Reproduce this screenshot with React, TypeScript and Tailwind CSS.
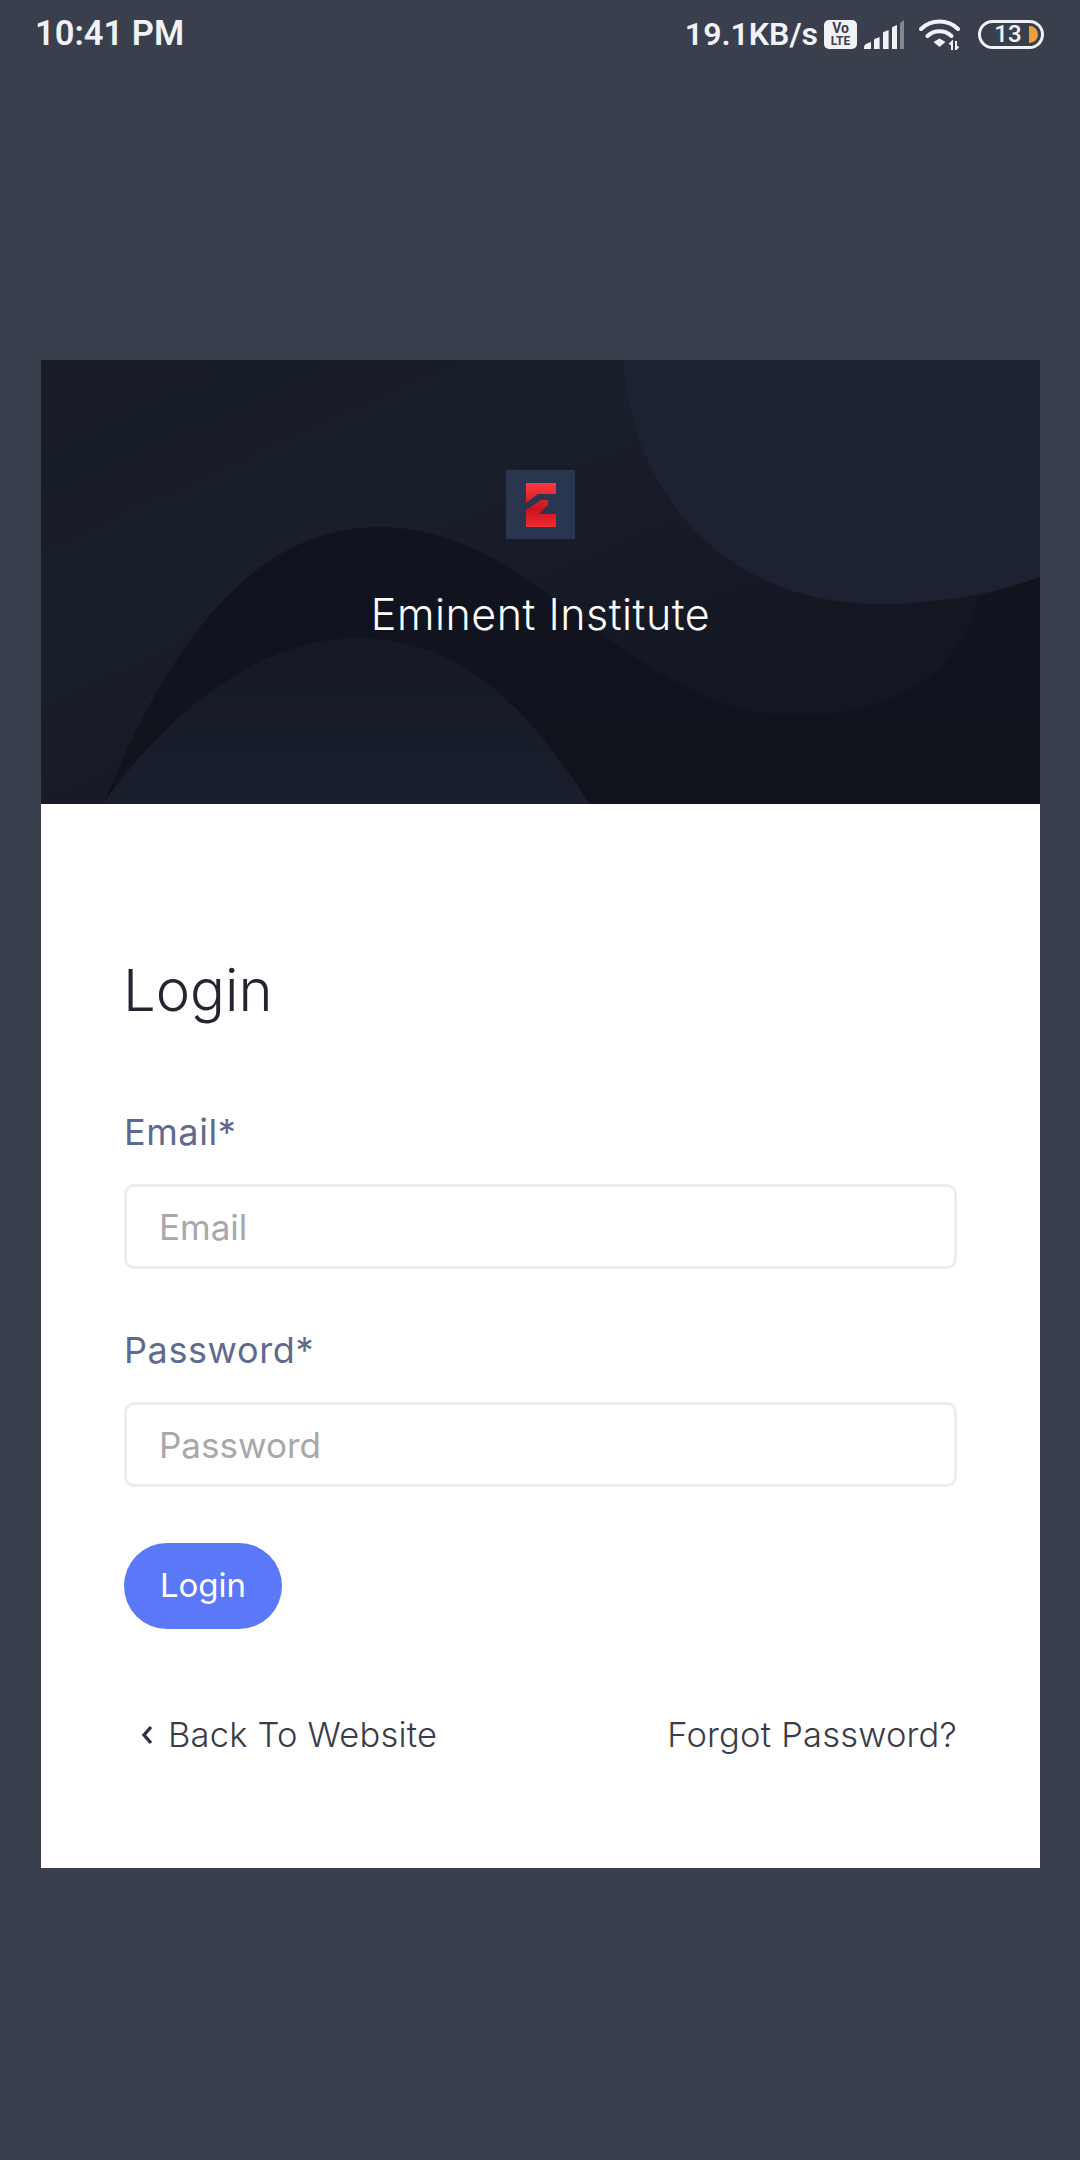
import * as React from "react"

function SignalIcon() {
  return (
    <svg width="40" height="30" viewBox="0 0 40 30" className="ml-[7px]">
      <path d="M0 30 v-2 a4 4 0 0 1 3-3.5 l4-1.5 v7z" fill="#f1f2f5" />
      <path d="M10 30 v-9 a1 1 0 0 1 .6-1 l5-2 v12z" fill="#f1f2f5" />
      <path d="M19 30 v-16 a1 1 0 0 1 .6-1 l5-2 v19z" fill="#f1f2f5" />
      <path d="M28 30 v-21 a1 1 0 0 1 .6-1 l4.4-2 v24z" fill="#f1f2f5" />
      <path d="M36 30 v-26 l4-3 v29z" fill="#83878f" />
    </svg>
  )
}

function WifiIcon() {
  return (
    <svg width="42" height="32" viewBox="0 0 42 32" className="ml-[15px]" fill="none">
      <path d="M2 11 C12 1 29 1 39 11" stroke="#f1f2f5" strokeWidth="4" strokeLinecap="round" />
      <path d="M8.5 18 C15 11.5 26 11.5 32.5 18" stroke="#f1f2f5" strokeWidth="4" strokeLinecap="round" />
      <path d="M14.5 24 L20.5 20.5 L26.5 24 L20.5 29z" fill="#f1f2f5" />
      <path d="M33 32 V24 L30.5 26.5" stroke="#f1f2f5" strokeWidth="2" />
      <path d="M37 23 V31 L39.5 28.5" stroke="#f1f2f5" strokeWidth="2" />
    </svg>
  )
}

function BatteryIcon() {
  return (
    <div className="relative ml-[17px] flex h-[29px] w-[66px] items-center justify-center rounded-full border-[3px] border-[#f1f2f5] pr-[6px]">
      <span className="font-['Roboto',sans-serif] text-[24px] leading-none font-medium text-[#f1f2f5]">13</span>
      <span className="absolute top-[3px] right-[3px] h-[17px] w-[9px] rounded-r-full bg-[#e9a23b]" />
    </div>
  )
}

function StatusBar() {
  return (
    <div className="flex h-[68px] items-center justify-between pr-[36px] pl-[35px] font-['Roboto',sans-serif] font-semibold text-[#f1f2f5]">
      <span className="text-[34.5px]">10:41 PM</span>
      <div className="flex items-center text-[32px]">
        <span>19.1KB/s</span>
        <div className="ml-[6px] flex h-[29px] w-[33px] flex-col items-center justify-center rounded-[5px] bg-[#f1f2f5] text-[#3a3f4d]">
          <span className="text-[14px] leading-[13px] font-bold">Vo</span>
          <span className="text-[12px] leading-[12px] font-bold">LTE</span>
        </div>
        <SignalIcon />
        <WifiIcon />
        <BatteryIcon />
      </div>
    </div>
  )
}

function HeaderWaves() {
  return (
    <svg className="absolute inset-0" width="999" height="444" viewBox="0 0 999 444">
      <defs>
        <linearGradient id="base-fill" x1="0" y1="0" x2="1" y2="1">
          <stop offset="0" stopColor="#171c28" />
          <stop offset="0.35" stopColor="#191e2b" />
          <stop offset="0.7" stopColor="#141722" />
        </linearGradient>
        <linearGradient id="dark-fill" x1="0" y1="0" x2="0" y2="1">
          <stop offset="0" stopColor="#11141f" />
          <stop offset="1" stopColor="#10131c" />
        </linearGradient>
        <linearGradient id="bump-fill" x1="0" y1="0" x2="0" y2="1">
          <stop offset="0" stopColor="#151925" />
          <stop offset="1" stopColor="#1a1f2e" />
        </linearGradient>
      </defs>
      <rect width="999" height="444" fill="url(#base-fill)" />
      {/* dark wave */}
      <path
        d="M62 444 C110 330 190 167 338 167 C500 167 590 355 751 355 C860 355 920 310 937 237 L999 217 V444 Z"
        fill="url(#dark-fill)"
      />
      {/* bump bottom left */}
      <path d="M62 444 C120 360 215 278 317 278 C420 278 490 350 548 444 Z" fill="url(#bump-fill)" />
      {/* blob top right */}
      <path d="M582 0 C590 130 680 244 840 244 C900 244 960 232 999 217 V0 Z" fill="#1c2231" />
    </svg>
  )
}

function Logo() {
  return (
    <div className="flex h-[69px] w-[69px] items-center justify-center bg-[#2a3550]">
      <svg width="30" height="44" viewBox="0 0 30 44">
        <defs>
          <linearGradient id="eminent-red" gradientUnits="userSpaceOnUse" x1="0" y1="0" x2="0" y2="44">
            <stop offset="0" stopColor="#fb3a42" />
            <stop offset="0.6" stopColor="#c9141d" />
            <stop offset="1" stopColor="#f02a32" />
          </linearGradient>
        </defs>
        <path d="M0 0 H30 V11 H12 L0 20 Z" fill="url(#eminent-red)" />
        <path d="M0 27 L15 17 H22 V22 L13 31 H30 V44 H0 Z" fill="url(#eminent-red)" />
      </svg>
    </div>
  )
}

function Field({ label, placeholder, type }: { label: string; placeholder: string; type: string }) {
  return (
    <div className="flex flex-col">
      <label className="text-[36px] leading-[52px] tracking-[0.6px] text-[#5f6a90]">{label}</label>
      <input
        type={type}
        placeholder={placeholder}
        className="mt-[26px] h-[85px] w-full rounded-[10px] border-[3px] border-[#ececf1] bg-white px-[32px] text-[35px] outline-none placeholder:text-[#a8a8a8]"
      />
    </div>
  )
}

export default function App() {
  return (
    <div className="h-[2160px] w-[1080px] overflow-hidden bg-[#3a3f4d] font-['Inter',sans-serif]">
      <StatusBar />
      <div className="mt-[292px] ml-[41px] w-[999px]">
        <div className="relative flex h-[444px] flex-col items-center overflow-hidden pt-[110px]">
          <HeaderWaves />
          <div className="relative flex flex-col items-center">
            <Logo />
            <h1 className="mt-[45px] text-[43px] leading-[60px] font-light tracking-[0.5px] text-white">Eminent Institute</h1>
          </div>
        </div>
        <div className="h-[1064px] bg-white px-[83px] pt-[150px]">
          <h2 className="-ml-[1px] text-[58px] leading-[72px] font-light text-[#23262e]">Login</h2>
          <div className="mt-[80px] flex flex-col gap-[55px]">
            <Field label="Email*" placeholder="Email" type="email" />
            <Field label="Password*" placeholder="Password" type="password" />
          </div>
          <button className="mt-[56px] h-[86px] w-[158px] rounded-full bg-[#5a78f8] text-[33px] text-white">Login</button>
          <div className="mt-[84px] flex items-center justify-between text-[34.5px] leading-[44px] font-light tracking-[0.2px] text-[#3a3d48]">
            <a className="flex items-center">
              <svg width="12" height="22" viewBox="0 0 12 22" className="mr-[15px] ml-[17px]" fill="none">
                <path d="M10 3 L3 11 L10 19" stroke="#2f323c" strokeWidth="3.4" />
              </svg>
              Back To Website
            </a>
            <a>Forgot Password?</a>
          </div>
        </div>
      </div>
    </div>
  )
}
